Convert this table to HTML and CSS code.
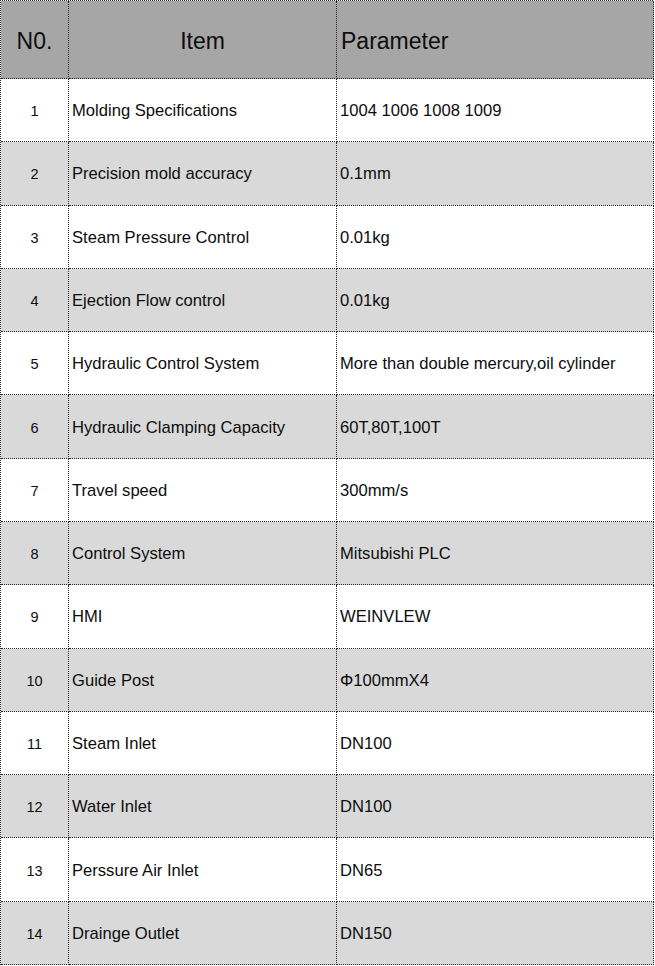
FILE: index.html
```html
<!DOCTYPE html>
<html>
<head>
<meta charset="utf-8">
<link rel="stylesheet" href="styles.css">
</head>
<body>
<div class="spec">
  <div class="row head"><div class="c no">N0.</div><div class="c item">Item</div><div class="c par">Parameter</div></div>
  <div class="row"><div class="c no">1</div><div class="c">Molding Specifications</div><div class="c">1004 1006 1008 1009</div></div>
  <div class="row alt"><div class="c no">2</div><div class="c">Precision mold accuracy</div><div class="c">0.1mm</div></div>
  <div class="row"><div class="c no">3</div><div class="c">Steam Pressure Control</div><div class="c">0.01kg</div></div>
  <div class="row alt"><div class="c no">4</div><div class="c">Ejection Flow control</div><div class="c">0.01kg</div></div>
  <div class="row"><div class="c no">5</div><div class="c">Hydraulic Control System</div><div class="c">More than double mercury,oil cylinder</div></div>
  <div class="row alt"><div class="c no">6</div><div class="c">Hydraulic Clamping Capacity</div><div class="c">60T,80T,100T</div></div>
  <div class="row"><div class="c no">7</div><div class="c">Travel speed</div><div class="c">300mm/s</div></div>
  <div class="row alt"><div class="c no">8</div><div class="c">Control System</div><div class="c">Mitsubishi PLC</div></div>
  <div class="row"><div class="c no">9</div><div class="c">HMI</div><div class="c">WEINVLEW</div></div>
  <div class="row alt"><div class="c no">10</div><div class="c">Guide Post</div><div class="c">Φ100mmX4</div></div>
  <div class="row"><div class="c no">11</div><div class="c">Steam Inlet</div><div class="c">DN100</div></div>
  <div class="row alt"><div class="c no">12</div><div class="c">Water Inlet</div><div class="c">DN100</div></div>
  <div class="row"><div class="c no">13</div><div class="c">Perssure Air Inlet</div><div class="c">DN65</div></div>
  <div class="row alt"><div class="c no">14</div><div class="c">Drainge Outlet</div><div class="c">DN150</div></div>
</div>
</body>
</html>
```
FILE: styles.css
```css
html, body {
  margin: 0;
  padding: 0;
  background: #ffffff;
}
.spec {
  display: grid;
  grid-template-columns: 68px 268px 317px;
  grid-template-rows: 78px repeat(14, 1fr);
  width: 653px;
  height: 965px;
  border-top: 1px dotted #2a2a2a;
  border-left: 1px dotted #2a2a2a;
  box-sizing: border-box;
  font-family: "Liberation Sans", Arial, sans-serif;
  color: #0d0d0d;
}
.row {
  display: contents;
}
.c {
  display: flex;
  align-items: center;
  padding-left: 3px;
  padding-top: 2px;
  border-right: 1px dotted #2a2a2a;
  border-bottom: 1px dotted #2a2a2a;
  font-size: 16.6px;
  background: #ffffff;
}
.row.alt .c {
  background: #d9d9d9;
}
.row.head .c {
  background: #a6a6a6;
  font-size: 23px;
  padding-top: 4px;
}
.c.no {
  justify-content: center;
  padding-left: 0;
  font-size: 14.5px;
}
.row.head .c.no {
  font-size: 23px;
}
.c.item {
  justify-content: center;
  padding-left: 0;
}
.row.head .c.par {
  padding-left: 4px;
}
```
